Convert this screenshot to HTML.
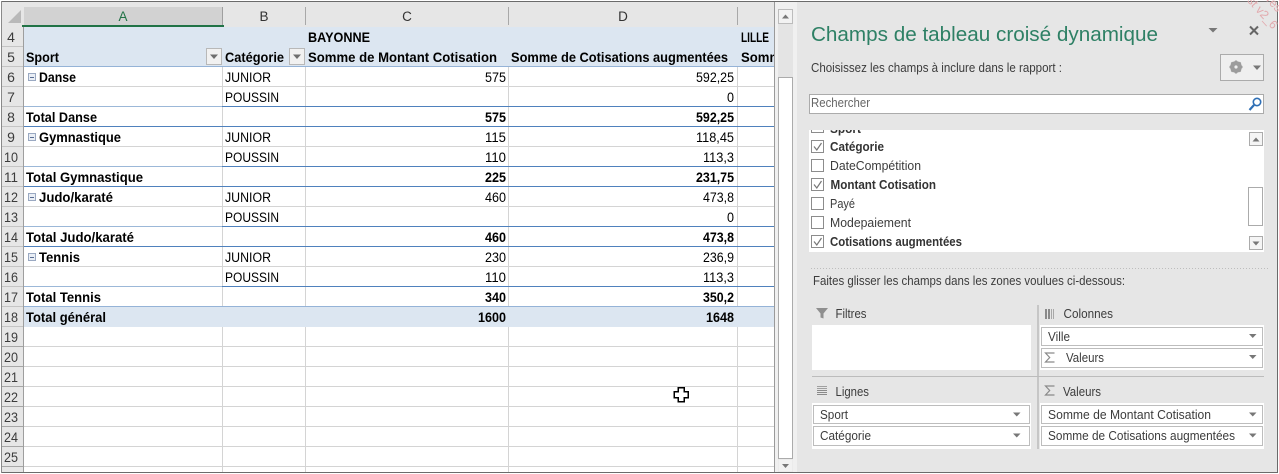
<!DOCTYPE html>
<html lang="fr"><head><meta charset="utf-8"><title>Champs de tableau croisé dynamique</title>
<style>
html,body{margin:0;padding:0;width:1279px;height:474px;overflow:hidden;background:#fff}
svg{display:block}
text{font-family:"Liberation Sans",sans-serif;font-size:13.5px;fill:#000}
.b{font-weight:bold}
.rh text{fill:#3c3c3c;text-anchor:middle;font-size:14px}
.p text{font-size:12.5px;fill:#3c3c3c}
.p text.bb{font-weight:bold;fill:#333}
</style></head><body>
<svg width="1279" height="474" viewBox="0 0 1279 474" xmlns="http://www.w3.org/2000/svg">
<defs>
<clipPath id="g"><rect x="24" y="27" width="750" height="445"/></clipPath>
<clipPath id="l"><rect x="809" y="130" width="440" height="122"/></clipPath>
</defs>
<g shape-rendering="crispEdges">
<rect width="1279" height="474" fill="#fff"/>
<!-- header strip -->
<rect x="2" y="2" width="773" height="25" fill="#e6e6e6"/>
<rect x="24" y="7" width="198" height="18" fill="#d2d2d2"/>
<rect x="222" y="7" width="1" height="18" fill="#9f9f9f"/>
<rect x="305" y="7" width="1" height="18" fill="#a8a8a8"/>
<rect x="508" y="7" width="1" height="18" fill="#a8a8a8"/>
<rect x="737" y="7" width="1" height="18" fill="#a8a8a8"/>
<rect x="22" y="25" width="202" height="3" fill="#217346"/>
<rect x="24" y="25" width="199" height="2" fill="#217346"/>
<rect x="220" y="27" width="5" height="2" fill="#217346"/>
<!-- row headers -->
<rect x="2" y="27" width="21" height="445" fill="#e6e6e6"/>
<rect x="23" y="27" width="1" height="445" fill="#9e9e9e"/>
<!-- pivot fill -->
<rect x="24" y="27" width="750" height="39" fill="#dce6f1"/>
<rect x="24" y="307" width="750" height="20" fill="#dce6f1"/>
<!-- verticals -->
<rect x="222" y="67" width="1" height="239" fill="#d4d4d4"/><rect x="305" y="67" width="1" height="239" fill="#d4d4d4"/><rect x="508" y="67" width="1" height="239" fill="#d4d4d4"/><rect x="737" y="67" width="1" height="239" fill="#d4d4d4"/>
<rect x="222" y="327" width="1" height="145" fill="#d4d4d4"/><rect x="305" y="327" width="1" height="145" fill="#d4d4d4"/><rect x="508" y="327" width="1" height="145" fill="#d4d4d4"/><rect x="737" y="327" width="1" height="145" fill="#d4d4d4"/>
<!-- horizontals -->
<rect x="24" y="66" width="750" height="1" fill="#95b3d7"/>
<rect x="24" y="86" width="750" height="1" fill="#d4d4d4"/>
<rect x="24" y="106" width="198" height="1" fill="#9cb8d8"/><rect x="222" y="106" width="552" height="1" fill="#4f81bd"/>
<rect x="24" y="126" width="750" height="1" fill="#4f81bd"/>
<rect x="24" y="146" width="750" height="1" fill="#d4d4d4"/>
<rect x="24" y="166" width="198" height="1" fill="#9cb8d8"/><rect x="222" y="166" width="552" height="1" fill="#4f81bd"/>
<rect x="24" y="186" width="750" height="1" fill="#4f81bd"/>
<rect x="24" y="206" width="750" height="1" fill="#d4d4d4"/>
<rect x="24" y="226" width="198" height="1" fill="#9cb8d8"/><rect x="222" y="226" width="552" height="1" fill="#4f81bd"/>
<rect x="24" y="246" width="750" height="1" fill="#4f81bd"/>
<rect x="24" y="266" width="750" height="1" fill="#d4d4d4"/>
<rect x="24" y="286" width="198" height="1" fill="#9cb8d8"/><rect x="222" y="286" width="552" height="1" fill="#4f81bd"/>
<rect x="24" y="306" width="750" height="1" fill="#95b3d7"/>
<rect x="24" y="346" width="750" height="1" fill="#d4d4d4"/><rect x="24" y="366" width="750" height="1" fill="#d4d4d4"/><rect x="24" y="386" width="750" height="1" fill="#d4d4d4"/><rect x="24" y="406" width="750" height="1" fill="#d4d4d4"/><rect x="24" y="426" width="750" height="1" fill="#d4d4d4"/><rect x="24" y="446" width="750" height="1" fill="#d4d4d4"/><rect x="24" y="466" width="750" height="1" fill="#d4d4d4"/>
<!-- row header separators -->
<rect x="2" y="46" width="21" height="1" fill="#c4c4c4"/><rect x="2" y="66" width="21" height="1" fill="#c4c4c4"/><rect x="2" y="86" width="21" height="1" fill="#c4c4c4"/><rect x="2" y="106" width="21" height="1" fill="#c4c4c4"/><rect x="2" y="126" width="21" height="1" fill="#c4c4c4"/><rect x="2" y="146" width="21" height="1" fill="#c4c4c4"/><rect x="2" y="166" width="21" height="1" fill="#c4c4c4"/><rect x="2" y="186" width="21" height="1" fill="#c4c4c4"/><rect x="2" y="206" width="21" height="1" fill="#c4c4c4"/><rect x="2" y="226" width="21" height="1" fill="#c4c4c4"/><rect x="2" y="246" width="21" height="1" fill="#c4c4c4"/><rect x="2" y="266" width="21" height="1" fill="#c4c4c4"/><rect x="2" y="286" width="21" height="1" fill="#c4c4c4"/><rect x="2" y="306" width="21" height="1" fill="#c4c4c4"/><rect x="2" y="326" width="21" height="1" fill="#c4c4c4"/><rect x="2" y="346" width="21" height="1" fill="#a6a6a6"/><rect x="2" y="366" width="21" height="1" fill="#a6a6a6"/><rect x="2" y="386" width="21" height="1" fill="#a6a6a6"/><rect x="2" y="406" width="21" height="1" fill="#a6a6a6"/><rect x="2" y="426" width="21" height="1" fill="#a6a6a6"/><rect x="2" y="446" width="21" height="1" fill="#a6a6a6"/><rect x="2" y="466" width="21" height="1" fill="#a6a6a6"/>
<!-- filter buttons -->
<rect x="206.500" y="48.500" width="15" height="16" fill="#f1f1f1" stroke="#b8b8b8"/>
<rect x="289.500" y="48.500" width="15" height="16" fill="#f1f1f1" stroke="#b8b8b8"/>
<!-- grid edge + scrollbar -->
<rect x="774" y="2" width="1" height="470" fill="#9a9a9a"/>
<rect x="775" y="2" width="22" height="470" fill="#f0f0f0"/>
<rect x="778" y="9" width="15" height="463" fill="#e4e4e4"/>
<rect x="778.500" y="9.500" width="14" height="14" fill="#f2f2f2" stroke="#bcbcbc"/>
<rect x="778.500" y="77.500" width="14" height="381" fill="#fff" stroke="#ababab"/>
<rect x="778.500" y="459.500" width="14" height="12" fill="#f2f2f2"/>
<!-- panel -->
<rect x="797" y="2" width="480" height="470" fill="#e6e6e6"/>
<!-- frame -->
<rect x="0" y="0" width="1279" height="1" fill="#fff"/>
<rect x="1" y="1" width="1277" height="1" fill="#6b6b6b"/>
<rect x="1" y="472" width="1277" height="1" fill="#6b6b6b"/>
<rect x="1" y="1" width="1" height="472" fill="#8a8a8a"/>
<rect x="1277" y="1" width="1" height="472" fill="#6b6b6b"/>
<!-- gear box / search -->
<rect x="1220.500" y="54.500" width="43" height="26" fill="#efefef" stroke="#ababab"/>
<rect x="809.500" y="94.500" width="454" height="19" fill="#fff" stroke="#ababab"/>
<!-- field list -->
<rect x="809" y="130" width="455" height="122" fill="#fff"/>
<rect x="1249.500" y="132.500" width="13" height="13" fill="#f5f5f5" stroke="#ababab"/>
<rect x="1248.500" y="187.500" width="14" height="38" fill="#fff" stroke="#ababab"/>
<rect x="1249.500" y="236.500" width="13" height="13" fill="#f5f5f5" stroke="#ababab"/>
<g fill="#fff" stroke="#8c8c8c">
<rect x="811.500" y="140.500" width="12" height="12"/><rect x="811.500" y="159.500" width="12" height="12"/><rect x="811.500" y="178.500" width="12" height="12"/><rect x="811.500" y="197.500" width="12" height="12"/><rect x="811.500" y="216.500" width="12" height="12"/><rect x="811.500" y="235.500" width="12" height="12"/>
</g>
<rect x="811" y="130" width="13" height="3" fill="#8c8c8c"/><rect x="812" y="130" width="11" height="2" fill="#fff"/>
<!-- dotted -->
<path d="M811 268.500H1268" stroke="#bdbdbd" stroke-dasharray="1 2" fill="none"/>
<!-- zones -->
<rect x="812" y="325" width="219" height="45" fill="#fff"/>
<rect x="1040" y="325" width="224" height="45" fill="#fff"/>
<rect x="812" y="403" width="219" height="46" fill="#fff"/>
<rect x="1040" y="403" width="224" height="46" fill="#fff"/>
<rect x="1037" y="305" width="2" height="144" fill="#c6c6c6"/>
<rect x="812" y="376" width="452" height="1" fill="#bcbcbc"/>
<g fill="#fff" stroke="#bdbdbd">
<rect x="1041.500" y="327.500" width="221" height="18"/><rect x="1041.500" y="348.500" width="221" height="19"/>
<rect x="813.500" y="405.500" width="216" height="18"/><rect x="813.500" y="426.500" width="216" height="19"/>
<rect x="1041.500" y="405.500" width="221" height="18"/><rect x="1041.500" y="426.500" width="221" height="19"/>
</g>
<!-- zone icons -->
<rect x="1045" y="309" width="2" height="10" fill="#8a8a8a"/><rect x="1048" y="309" width="2" height="10" fill="#8a8a8a"/><rect x="1051" y="309" width="1" height="10" fill="#a8a8a8"/><rect x="1053" y="309" width="1" height="10" fill="#a8a8a8"/>
<rect x="817" y="386" width="10" height="1" fill="#a0a0a0"/><rect x="817" y="388" width="10" height="1" fill="#a0a0a0"/><rect x="817" y="390" width="10" height="1" fill="#8a8a8a"/><rect x="817" y="392" width="10" height="1" fill="#8a8a8a"/><rect x="817" y="394" width="10" height="1" fill="#8a8a8a"/>
<!-- minus boxes -->
<g fill="#e9eef5" stroke="#9aa9c2">
<rect x="28.500" y="73.500" width="7" height="7"/><rect x="28.500" y="133.500" width="7" height="7"/><rect x="28.500" y="193.500" width="7" height="7"/><rect x="28.500" y="253.500" width="7" height="7"/>
</g>
<rect x="30" y="77" width="4" height="1" fill="#5a6d92"/><rect x="30" y="137" width="4" height="1" fill="#5a6d92"/><rect x="30" y="197" width="4" height="1" fill="#5a6d92"/><rect x="30" y="257" width="4" height="1" fill="#5a6d92"/>
</g>
<!-- corner triangle -->
<path d="M8 23H21V10Z" fill="#b9b9b9"/>
<!-- filter arrows & scroll arrows -->
<path d="M210 54.500h8l-4 4.500zM293 54.500h8l-4 4.500z" fill="#6e6e6e"/>
<path d="M782 18.500h7l-3.500-4zM782 464h7l-3.500 4z" fill="#777"/>
<path d="M1252.500 141.500h7l-3.500-4zM1252.500 241.500h7l-3.500 4z" fill="#777"/>
<path d="M1208.500 28h9l-4.500 4.500zM1253 65.500h8l-4 4.500z" fill="#777"/>
<path d="M1249 334h7.500l-3.750 4zM1249 355h7.500l-3.750 4zM1249 412.500h7.500l-3.750 4zM1249 433.500h7.500l-3.750 4zM1013 412.500h7.500l-3.750 4zM1013 433.500h7.500l-3.750 4z" fill="#777"/>
<!-- close -->
<path d="M1250 26.500l8 8M1258 26.500l-8 8" stroke="#666" stroke-width="2" fill="none"/>
<!-- gear -->
<circle cx="1236" cy="67" r="4.200" fill="none" stroke="#9c9c9c" stroke-width="3.400"/>
<path d="M1236 60.500v13M1229.500 67h13M1231.400 62.400l9.200 9.200M1240.600 62.400l-9.200 9.200" stroke="#9c9c9c" stroke-width="2.200" fill="none"/>
<circle cx="1236" cy="67" r="1.600" fill="#efefef"/>
<!-- magnifier -->
<circle cx="1257" cy="102" r="3.700" fill="none" stroke="#2f6fb5" stroke-width="1.600"/>
<path d="M1254 105l-4.500 5" stroke="#2f6fb5" stroke-width="2.200" fill="none"/>
<!-- funnel -->
<path d="M816 308h12l-4.500 5.500v5l-3 -1v-4z" fill="#8f8f8f"/>
<!-- sigmas -->
<path d="M1054.500 353h-9l4.200 4.500-4.200 4.500h9" fill="none" stroke="#8a8a8a" stroke-width="1.200"/>
<path d="M1054.500 386h-9l4.200 4.500-4.200 4.500h9" fill="none" stroke="#8a8a8a" stroke-width="1.200"/>
<!-- checks -->
<path d="M814 146.500l2.800 3.500 4.700-7M814 184.500l2.800 3.500 4.700-7M814 241.500l2.800 3.500 4.700-7" fill="none" stroke="#777" stroke-width="1.200"/>
<!-- cursor -->
<path d="M678.500 387.500h6v4h4v6h-4v4h-6v-4h-4v-6h4z" fill="#fff" stroke="#000" stroke-width="1.500" transform="translate(-0.500 0)" shape-rendering="crispEdges"/>
<!-- watermark -->
<g transform="rotate(48 1258 15)"><text x="1240" y="14" style="font-size:12px;fill:#e2a9ad">st v2_6</text></g>
<g transform="rotate(48 1270 2)"><text x="1266" y="4" style="font-size:12px;fill:#e2a9ad">res</text></g>

<!-- col letters -->
<text x="123" y="21" text-anchor="middle" style="fill:#217346">A</text>
<text x="264" y="21" text-anchor="middle" style="fill:#333">B</text>
<text x="407" y="21" text-anchor="middle" style="fill:#333">C</text>
<text x="623" y="21" text-anchor="middle" style="fill:#333">D</text>
<!-- row numbers -->
<g class="rh">
<text x="11" y="42">4</text><text x="11" y="62">5</text><text x="11" y="82">6</text><text x="11" y="102">7</text><text x="11" y="122">8</text><text x="11" y="142">9</text>
<text x="11" y="162" textLength="14" lengthAdjust="spacingAndGlyphs">10</text><text x="11" y="182" textLength="14" lengthAdjust="spacingAndGlyphs">11</text><text x="11" y="202" textLength="14" lengthAdjust="spacingAndGlyphs">12</text><text x="11" y="222" textLength="14" lengthAdjust="spacingAndGlyphs">13</text><text x="11" y="242" textLength="14" lengthAdjust="spacingAndGlyphs">14</text><text x="11" y="262" textLength="14" lengthAdjust="spacingAndGlyphs">15</text><text x="11" y="282" textLength="14" lengthAdjust="spacingAndGlyphs">16</text><text x="11" y="302" textLength="14" lengthAdjust="spacingAndGlyphs">17</text><text x="11" y="322" textLength="14" lengthAdjust="spacingAndGlyphs">18</text><text x="11" y="342" textLength="14" lengthAdjust="spacingAndGlyphs">19</text><text x="11" y="362" textLength="14" lengthAdjust="spacingAndGlyphs">20</text><text x="11" y="382" textLength="14" lengthAdjust="spacingAndGlyphs">21</text><text x="11" y="402" textLength="14" lengthAdjust="spacingAndGlyphs">22</text><text x="11" y="422" textLength="14" lengthAdjust="spacingAndGlyphs">23</text><text x="11" y="442" textLength="14" lengthAdjust="spacingAndGlyphs">24</text><text x="11" y="462" textLength="14" lengthAdjust="spacingAndGlyphs">25</text>
</g>
<!-- grid text -->
<g clip-path="url(#g)">
<text class="b" x="308" y="42" textLength="62" lengthAdjust="spacingAndGlyphs">BAYONNE</text>
<text class="b" x="741" y="42" textLength="28" lengthAdjust="spacingAndGlyphs">LILLE</text>
<text class="b" x="26" y="62" textLength="33" lengthAdjust="spacingAndGlyphs">Sport</text>
<text class="b" x="225" y="62" textLength="59" lengthAdjust="spacingAndGlyphs">Catégorie</text>
<text class="b" x="308" y="62" textLength="189" lengthAdjust="spacingAndGlyphs">Somme de Montant Cotisation</text>
<text class="b" x="511" y="62" textLength="217" lengthAdjust="spacingAndGlyphs">Somme de Cotisations augmentées</text>
<text class="b" x="741" y="62" textLength="189" lengthAdjust="spacingAndGlyphs">Somme de Montant Cotisation</text>

<text class="b" x="39" y="82" textLength="37" lengthAdjust="spacingAndGlyphs">Danse</text>
<text class="b" x="26" y="122" textLength="71" lengthAdjust="spacingAndGlyphs">Total Danse</text>
<text class="b" x="39" y="142" textLength="82" lengthAdjust="spacingAndGlyphs">Gymnastique</text>
<text class="b" x="26" y="182" textLength="117" lengthAdjust="spacingAndGlyphs">Total Gymnastique</text>
<text class="b" x="39" y="202" textLength="74" lengthAdjust="spacingAndGlyphs">Judo/karaté</text>
<text class="b" x="26" y="242" textLength="108" lengthAdjust="spacingAndGlyphs">Total Judo/karaté</text>
<text class="b" x="39" y="262" textLength="41" lengthAdjust="spacingAndGlyphs">Tennis</text>
<text class="b" x="26" y="302" textLength="75" lengthAdjust="spacingAndGlyphs">Total Tennis</text>
<text class="b" x="26" y="322" textLength="80" lengthAdjust="spacingAndGlyphs">Total général</text>

<text x="225" y="82" textLength="46" lengthAdjust="spacingAndGlyphs">JUNIOR</text><text x="225" y="102" textLength="54" lengthAdjust="spacingAndGlyphs">POUSSIN</text>
<text x="225" y="142" textLength="46" lengthAdjust="spacingAndGlyphs">JUNIOR</text><text x="225" y="162" textLength="54" lengthAdjust="spacingAndGlyphs">POUSSIN</text>
<text x="225" y="202" textLength="46" lengthAdjust="spacingAndGlyphs">JUNIOR</text><text x="225" y="222" textLength="54" lengthAdjust="spacingAndGlyphs">POUSSIN</text>
<text x="225" y="262" textLength="46" lengthAdjust="spacingAndGlyphs">JUNIOR</text><text x="225" y="282" textLength="54" lengthAdjust="spacingAndGlyphs">POUSSIN</text>

<text x="485" y="82" textLength="21" lengthAdjust="spacingAndGlyphs">575</text>
<text class="b" x="485" y="122" textLength="21" lengthAdjust="spacingAndGlyphs">575</text>
<text x="485" y="142" textLength="21" lengthAdjust="spacingAndGlyphs">115</text>
<text x="485" y="162" textLength="21" lengthAdjust="spacingAndGlyphs">110</text>
<text class="b" x="485" y="182" textLength="21" lengthAdjust="spacingAndGlyphs">225</text>
<text x="485" y="202" textLength="21" lengthAdjust="spacingAndGlyphs">460</text>
<text class="b" x="485" y="242" textLength="21" lengthAdjust="spacingAndGlyphs">460</text>
<text x="485" y="262" textLength="21" lengthAdjust="spacingAndGlyphs">230</text>
<text x="485" y="282" textLength="21" lengthAdjust="spacingAndGlyphs">110</text>
<text class="b" x="485" y="302" textLength="21" lengthAdjust="spacingAndGlyphs">340</text>
<text class="b" x="478" y="322" textLength="28" lengthAdjust="spacingAndGlyphs">1600</text>

<text x="696" y="82" textLength="38" lengthAdjust="spacingAndGlyphs">592,25</text>
<text x="727" y="102" textLength="7" lengthAdjust="spacingAndGlyphs">0</text>
<text class="b" x="696" y="122" textLength="38" lengthAdjust="spacingAndGlyphs">592,25</text>
<text x="696" y="142" textLength="38" lengthAdjust="spacingAndGlyphs">118,45</text>
<text x="703" y="162" textLength="31" lengthAdjust="spacingAndGlyphs">113,3</text>
<text class="b" x="696" y="182" textLength="38" lengthAdjust="spacingAndGlyphs">231,75</text>
<text x="703" y="202" textLength="31" lengthAdjust="spacingAndGlyphs">473,8</text>
<text x="727" y="222" textLength="7" lengthAdjust="spacingAndGlyphs">0</text>
<text class="b" x="703" y="242" textLength="31" lengthAdjust="spacingAndGlyphs">473,8</text>
<text x="703" y="262" textLength="31" lengthAdjust="spacingAndGlyphs">236,9</text>
<text x="703" y="282" textLength="31" lengthAdjust="spacingAndGlyphs">113,3</text>
<text class="b" x="703" y="302" textLength="31" lengthAdjust="spacingAndGlyphs">350,2</text>
<text class="b" x="706" y="322" textLength="28" lengthAdjust="spacingAndGlyphs">1648</text>
</g>
<!-- panel text -->
<g class="p">
<text x="811" y="41" textLength="347" lengthAdjust="spacingAndGlyphs" style="font-size:20.500px;fill:#2e8065">Champs de tableau croisé dynamique</text>
<text x="811" y="72" textLength="251" lengthAdjust="spacingAndGlyphs">Choisissez les champs à inclure dans le rapport :</text>
<text x="811" y="107" textLength="59" lengthAdjust="spacingAndGlyphs" style="fill:#666">Rechercher</text>
<g clip-path="url(#l)">
<text class="bb" x="830" y="133" textLength="31" lengthAdjust="spacingAndGlyphs">Sport</text>
<text class="bb" x="830" y="151" textLength="54" lengthAdjust="spacingAndGlyphs">Catégorie</text>
<text x="830" y="170" textLength="91" lengthAdjust="spacingAndGlyphs">DateCompétition</text>
<text class="bb" x="830.500" y="189" textLength="105.500" lengthAdjust="spacingAndGlyphs">Montant Cotisation</text>
<text x="830" y="208" textLength="25" lengthAdjust="spacingAndGlyphs">Payé</text>
<text x="830" y="227" textLength="81" lengthAdjust="spacingAndGlyphs">Modepaiement</text>
<text class="bb" x="830" y="246" textLength="132" lengthAdjust="spacingAndGlyphs">Cotisations augmentées</text>
</g>
<text x="813" y="285" textLength="312" lengthAdjust="spacingAndGlyphs">Faites glisser les champs dans les zones voulues ci-dessous:</text>
<text x="835.500" y="318" textLength="31" lengthAdjust="spacingAndGlyphs">Filtres</text>
<text x="1063.500" y="318" textLength="49.500" lengthAdjust="spacingAndGlyphs">Colonnes</text>
<text x="835.500" y="396" textLength="33.500" lengthAdjust="spacingAndGlyphs">Lignes</text>
<text x="1063" y="396" textLength="38" lengthAdjust="spacingAndGlyphs">Valeurs</text>
<text x="1048" y="341" textLength="22" lengthAdjust="spacingAndGlyphs">Ville</text>
<text x="1066" y="362" textLength="38" lengthAdjust="spacingAndGlyphs">Valeurs</text>
<text x="820" y="419" textLength="28" lengthAdjust="spacingAndGlyphs">Sport</text>
<text x="820" y="440" textLength="51" lengthAdjust="spacingAndGlyphs">Catégorie</text>
<text x="1048" y="419" textLength="163" lengthAdjust="spacingAndGlyphs">Somme de Montant Cotisation</text>
<text x="1048" y="440" textLength="187" lengthAdjust="spacingAndGlyphs">Somme de Cotisations augmentées</text>
</g>
</svg>
</body></html>
